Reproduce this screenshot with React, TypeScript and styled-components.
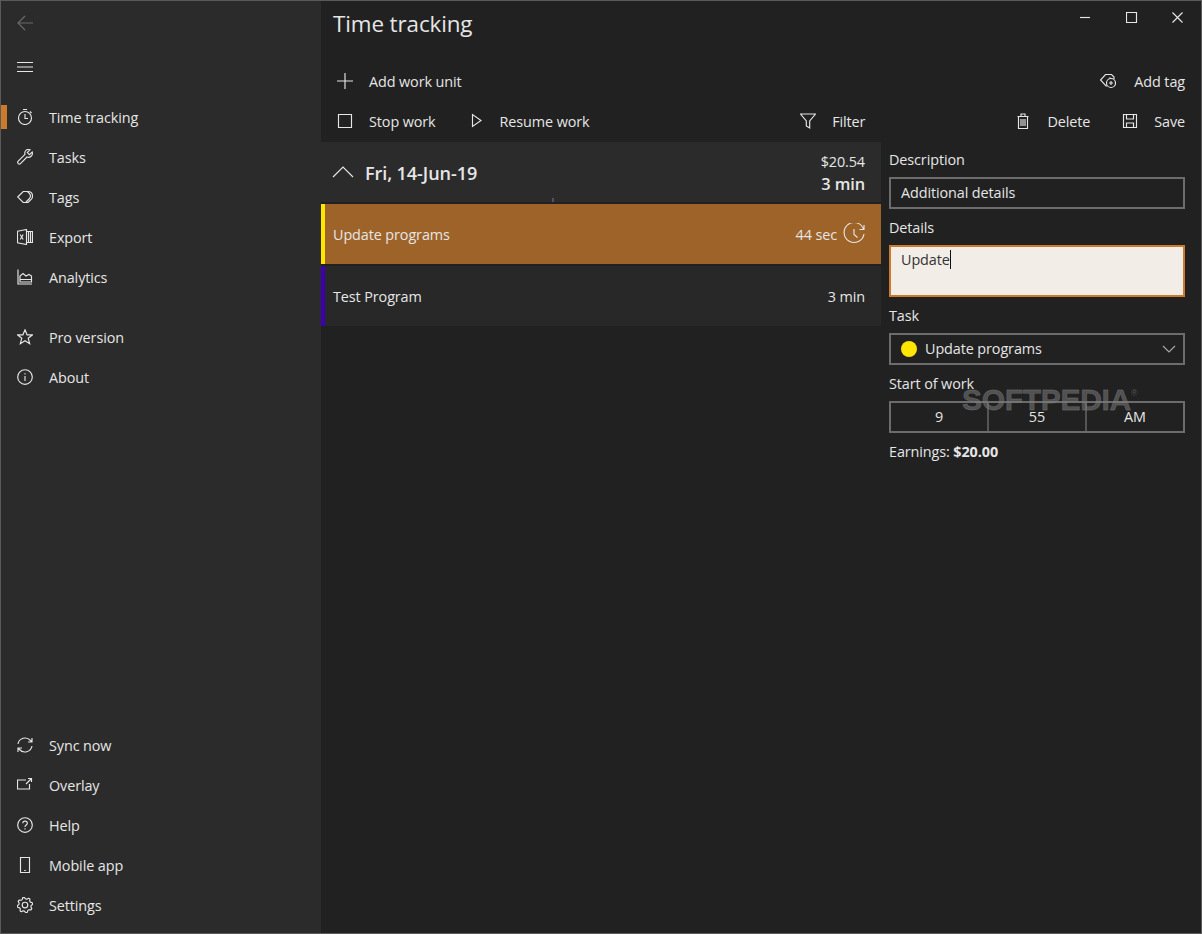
import React from 'react';
import styled, { createGlobalStyle } from 'styled-components';

const GlobalStyle = createGlobalStyle`
    html, body {
        margin: 0;
        padding: 0;
        background: #212121;
    }
    * {
        box-sizing: border-box;
    }
`;

const Window = styled.div`
    width: 1202px;
    height: 934px;
    display: flex;
    border: 1px solid #5a5a5a;
    background: #212121;
    color: #e6e6e6;
    font-family: 'Open Sans', 'Noto Sans', sans-serif;
    font-size: 14.4px;
    letter-spacing: -0.1px;
    overflow: hidden;
    position: relative;
`;

const Sidebar = styled.nav`
    width: 320px;
    flex: none;
    display: flex;
    flex-direction: column;
    background: #2b2b2b;
    padding-bottom: 8px;
`;

const TopIcon = styled.div<{ $dim?: boolean }>`
    height: 44px;
    padding-left: 16px;
    display: flex;
    align-items: center;
    color: ${(p) => (p.$dim ? '#6a6a6a' : '#e6e6e6')};
`;

const NavGroup = styled.div<{ $top: number }>`
    display: flex;
    flex-direction: column;
    margin-top: ${(p) => p.$top}px;
`;

const BottomGroup = styled(NavGroup)`
    margin-top: auto;
`;

const NavItem = styled.div<{ $active?: boolean }>`
    position: relative;
    height: 40px;
    padding-left: 16px;
    display: flex;
    align-items: center;
    gap: 16px;

    &::before {
        content: '';
        display: ${(p) => (p.$active ? 'block' : 'none')};
        position: absolute;
        left: 0;
        top: 8px;
        width: 6px;
        height: 24px;
        background: #cc7a2b;
    }
`;

const Glyph = styled.svg`
    width: 16px;
    height: 16px;
    flex: none;
    fill: none;
    stroke: currentColor;
    stroke-width: 1.15;
    display: block;
`;

const Main = styled.main`
    flex: 1;
    min-width: 0;
    display: flex;
    flex-direction: column;
`;

const TitleBar = styled.header`
    height: 60px;
    display: flex;
    justify-content: space-between;
    padding-left: 12px;
`;

const Title = styled.h1`
    margin: 0;
    font-size: 22.4px;
    font-weight: 400;
    line-height: 46px;
    letter-spacing: -0.1px;
`;

const WindowControls = styled.div`
    display: flex;
    gap: 30px;
    padding: 8px 13px 0 0;
`;

const Toolbar = styled.div`
    height: 40px;
    display: flex;
    align-items: center;
    padding: 0 16px;
`;

const ToolbarSpacer = styled.div<{ $width?: number }>`
    flex: ${(p) => (p.$width ? 'none' : 1)};
    width: ${(p) => p.$width ?? 0}px;
`;

const ToolButton = styled.div<{ $gap?: number }>`
    display: flex;
    align-items: center;
    gap: ${(p) => p.$gap ?? 16}px;
`;

const Content = styled.div`
    flex: 1;
    display: flex;
    min-height: 0;
    padding-top: 1px;
`;

const ListPane = styled.section`
    width: 560px;
    flex: none;
    display: flex;
    flex-direction: column;
    gap: 2px;
`;

const DayHeader = styled.div`
    position: relative;
    height: 60px;
    padding: 0 16px 0 11px;
    display: flex;
    align-items: center;
    background: #2b2b2b;
`;

const DayTitle = styled.div`
    margin-left: 11px;
    padding-top: 2px;
    font-size: 18.1px;
    font-weight: 600;
`;

const DayTotals = styled.div`
    margin-left: auto;
    padding-top: 2px;
    text-align: right;
    line-height: 22px;
`;

const Strong = styled.div`
    font-size: 16.4px;
    font-weight: 600;
`;

const Tick = styled.span`
    position: absolute;
    left: 231px;
    bottom: 0;
    width: 2px;
    height: 4px;
    background: #5a4a6a;
`;

const WorkRow = styled.div<{ $accent: string; $selected?: boolean }>`
    height: 60px;
    display: flex;
    align-items: center;
    padding: 0 16px 0 8px;
    border-left: 4px solid ${(p) => p.$accent};
    background: ${(p) => (p.$selected ? '#9e6329' : '#282828')};
`;

const RowTime = styled.div`
    margin-left: auto;
    display: flex;
    align-items: center;
    gap: 6px;
`;

const RowIcon = styled(Glyph)`
    width: 22px;
    height: 22px;
`;

const DetailPane = styled.aside`
    width: 296px;
    margin: -1px 0 0 8px;
    display: flex;
    flex-direction: column;
`;

const FieldLabel = styled.label`
    display: block;
    height: 36px;
    padding-top: 9px;
    line-height: 20px;
`;

const Field = styled.div`
    height: 32px;
    padding: 0 10px 2px;
    display: flex;
    align-items: center;
    border: 2px solid #6c6c6c;
`;

const FocusedField = styled(Field)`
    height: 52px;
    align-items: flex-start;
    padding-top: 3px;
    border-color: #cc7a2b;
    background: #f3ede8;
    color: #333;
    line-height: 20px;
`;

const Caret = styled.span`
    display: inline-block;
    width: 1px;
    height: 19px;
    background: #111;
    vertical-align: top;
`;

const ColorDot = styled.span`
    width: 16px;
    height: 16px;
    border-radius: 50%;
    background: #ffe600;
    margin: 1px 8px 0 0;
`;

const Chevron = styled(Glyph)`
    margin: 2px -3px 0 auto;
    width: 14px;
    height: 14px;
    color: #a8a8a8;
`;

const TimePicker = styled.div`
    height: 32px;
    display: grid;
    grid-template-columns: 96px 98px 1fr;
    border: 2px solid #6c6c6c;
`;

const TimeCell = styled.div`
    display: flex;
    align-items: center;
    justify-content: center;
    padding-bottom: 2px;
    & + & {
        border-left: 2px solid #555;
    }
`;

const Earnings = styled.div`
    margin-top: 9px;
    line-height: 20px;
`;

const Watermark = styled.div`
    position: absolute;
    left: 961px;
    top: 382px;
    font-family: 'Liberation Sans', sans-serif;
    font-size: 30px;
    font-weight: 700;
    letter-spacing: -0.3px;
    color: rgba(125, 125, 125, 0.55);
    -webkit-text-stroke: 0.8px rgba(125, 125, 125, 0.45);
    pointer-events: none;

    sup {
        font-size: 9px;
        font-weight: 400;
        vertical-align: 14px;
        -webkit-text-stroke: 0;
    }
`;

// scalloped outline for the settings cog
const gearPath = () => {
    const points: string[] = [];
    for (let i = 0; i < 32; i += 1) {
        const radius = i % 4 < 2 ? 7.7 : 6.1;
        const angle = ((i + 0.5) * Math.PI) / 16 - Math.PI / 8;
        points.push(`${(8 + radius * Math.cos(angle)).toFixed(2)} ${(8 + radius * Math.sin(angle)).toFixed(2)}`);
    }
    return `M${points.join('L')}Z`;
};

const icons: Record<string, React.ReactNode> = {
    back: <path d="M16 8H1M8 1 1 8l7 7" />,
    menu: <path d="M0 3.5h16M0 8h16M0 12.5h16" />,
    timer: (
        <>
            <circle cx="8" cy="9" r="6.5" />
            <path d="M6 .5h4M8 5v4.500h3M13 2.500l1.500 1.500" />
        </>
    ),
    wrench: (
        <path d="M1.200 12.200 8 5.400C7.200 3 8.800.5 11.400.5c.6 0 1.100.1 1.600.3L10.300 3.600l2.100 2.100L15.200 3c.9 2.600-1 5.300-3.700 5.300-.6 0-1-.1-1.500-.3l-6.800 6.800c-1.500 1.200-3.400-1.100-2-2.600Z" />
    ),
    tag: (
        <path d="M.7 8 6.200 2.500H11C14 2.500 15.500 4.800 15.500 7.200C15.500 8.800 14.700 10.200 13.500 11L11 13.500H6.200ZM10.500 3C13 4 14.500 7 12.500 9.500L9 13" />
    ),
    excel: (
        <>
            <path d="M.5 2.200 9.500.5v15l-9-1.700ZM9.500 2.500h6v11h-6" />
            <path d="M3.200 5.500l3 5M6.200 5.500l-3 5M11.500 3v10M13.500 3v10" />
        </>
    ),
    chart: (
        <path d="M1 .5v14.500h14M3 13h11.500v-2.500H3ZM3 10.500V7l3-2.500 3 2.500 3-1.500 2.500 1.500v3.500" />
    ),
    star: <path d="M8 .8l2.100 5h5.400l-4.300 3.400 1.500 5.500L8 11.700l-4.700 3 1.500-5.500L.5 5.800h5.400Z" />,
    info: (
        <>
            <circle cx="8" cy="8" r="7.300" />
            <path d="M8 7v5M8 4.200v1.200" />
        </>
    ),
    sync: (
        <path d="M1 7a7.200 7.200 0 0 1 12.500-3.500L15 5M15 1v4h-4M15 9a7.200 7.200 0 0 1-12.500 3.500L1 11M1 15v-4h4" />
    ),
    overlay: <path d="M9 3H.5v9h12V7M9 7l5-5M11 1.500h3.500V5" />,
    help: (
        <>
            <circle cx="8" cy="8" r="7.300" />
            <path d="M5.800 6.200C5.800 3.500 10.300 3.500 10.300 6.200c0 1.800-2.300 1.800-2.300 3.800M8 11.300v1.200" />
        </>
    ),
    mobile: <path d="M3.500.5h9v15h-9ZM7.200 13.500h1.600" />,
    gear: (
        <>
            <circle cx="8" cy="8" r="2.800" />
            <path d={gearPath()} strokeLinejoin="round" />
        </>
    ),
    plus: <path d="M8 0v16M0 8h16" />,
    stop: <path d="M1.500 1.500h13v13h-13Z" />,
    play: <path d="M4.500 1.500v12L13 7.500Z" />,
    filter: <path d="M.5 1h15L9.700 8v7l-3.400-2V8Z" />,
    addTag: (
        <>
            <path d="M7 13H6L.5 7 5.500 1.500h6L14 4v2" />
            <circle cx="11" cy="10" r="4.500" />
            <path d="M11 8v4M9 10h4M9.500 4.500h.8" />
        </>
    ),
    trash: <path d="M2.500 3.500h11M3.500 3.500v12h9v-12M6 3.500V1h4v2.500M6 6v7M8 6v7M10 6v7" />,
    save: <path d="M1.500 1.500h13v13h-13ZM4.500 1.500v4.500h7v-4.500M4.500 14.500v-4.500h7v4.500" />,
    recent: <path d="M20.500 6A10 10 0 1 0 21 11M21 2v4.500h-4.500M11 6v5.500l3.500 3" />,
    chevronUp: <path d="M1 16 11 6l10 10" />,
    chevronDown: <path d="M1 4l6 6 6-6" />,
    minimize: <path d="M0 8.500h10" />,
    maximize: <path d="M.5 3.500h10v10H.5Z" />,
    close: <path d="M.5 3.500l10 10M10.500 3.500l-10 10" />,
};

const Icon = ({ name }: { name: string }) => <Glyph viewBox="0 0 16 16">{icons[name]}</Glyph>;

const mainNav = [
    { icon: 'timer', label: 'Time tracking', active: true },
    { icon: 'wrench', label: 'Tasks' },
    { icon: 'tag', label: 'Tags' },
    { icon: 'excel', label: 'Export' },
    { icon: 'chart', label: 'Analytics' },
];

const infoNav = [
    { icon: 'star', label: 'Pro version' },
    { icon: 'info', label: 'About' },
];

const bottomNav = [
    { icon: 'sync', label: 'Sync now' },
    { icon: 'overlay', label: 'Overlay' },
    { icon: 'help', label: 'Help' },
    { icon: 'mobile', label: 'Mobile app' },
    { icon: 'gear', label: 'Settings' },
];

type NavEntry = { icon: string; label: string; active?: boolean };

const renderNav = (items: NavEntry[]) =>
    items.map((item) => (
        <NavItem key={item.label} $active={item.active}>
            <Icon name={item.icon} />
            <span>{item.label}</span>
        </NavItem>
    ));

const App = () => (
    <Window>
        <GlobalStyle />
        <Sidebar>
            <TopIcon $dim>
                <Icon name="back" />
            </TopIcon>
            <TopIcon>
                <Icon name="menu" />
            </TopIcon>
            <NavGroup $top={8}>{renderNav(mainNav)}</NavGroup>
            <NavGroup $top={20}>{renderNav(infoNav)}</NavGroup>
            <BottomGroup $top={0}>{renderNav(bottomNav)}</BottomGroup>
        </Sidebar>

        <Main>
            <TitleBar>
                <Title>Time tracking</Title>
                <WindowControls>
                    <Icon name="minimize" />
                    <Icon name="maximize" />
                    <Icon name="close" />
                </WindowControls>
            </TitleBar>

            <Toolbar>
                <ToolButton>
                    <Icon name="plus" />
                    <span>Add work unit</span>
                </ToolButton>
                <ToolbarSpacer />
                <ToolButton $gap={18}>
                    <Icon name="addTag" />
                    <span>Add tag</span>
                </ToolButton>
            </Toolbar>

            <Toolbar>
                <ToolButton>
                    <Icon name="stop" />
                    <span>Stop work</span>
                </ToolButton>
                <ToolbarSpacer $width={32} />
                <ToolButton>
                    <Icon name="play" />
                    <span>Resume work</span>
                </ToolButton>
                <ToolbarSpacer />
                <ToolButton>
                    <Icon name="filter" />
                    <span>Filter</span>
                </ToolButton>
                <ToolbarSpacer $width={150} />
                <ToolButton>
                    <Icon name="trash" />
                    <span>Delete</span>
                </ToolButton>
                <ToolbarSpacer $width={32} />
                <ToolButton>
                    <Icon name="save" />
                    <span>Save</span>
                </ToolButton>
            </Toolbar>

            <Content>
                <ListPane>
                    <DayHeader>
                        <RowIcon viewBox="0 0 22 22">{icons.chevronUp}</RowIcon>
                        <DayTitle>Fri, 14-Jun-19</DayTitle>
                        <DayTotals>
                            <div>$20.54</div>
                            <Strong>3 min</Strong>
                        </DayTotals>
                        <Tick />
                    </DayHeader>
                    <WorkRow $accent="#ffe600" $selected>
                        <span>Update programs</span>
                        <RowTime>
                            <span>44 sec</span>
                            <RowIcon viewBox="0 0 22 22">{icons.recent}</RowIcon>
                        </RowTime>
                    </WorkRow>
                    <WorkRow $accent="#3d00b0">
                        <span>Test Program</span>
                        <RowTime>3 min</RowTime>
                    </WorkRow>
                </ListPane>

                <DetailPane>
                    <FieldLabel>Description</FieldLabel>
                    <Field>Additional details</Field>
                    <FieldLabel>Details</FieldLabel>
                    <FocusedField>
                        <span>
                            Update
                            <Caret />
                        </span>
                    </FocusedField>
                    <FieldLabel>Task</FieldLabel>
                    <Field>
                        <ColorDot />
                        Update programs
                        <Chevron viewBox="0 0 14 14">{icons.chevronDown}</Chevron>
                    </Field>
                    <FieldLabel>Start of work</FieldLabel>
                    <TimePicker>
                        <TimeCell>9</TimeCell>
                        <TimeCell>55</TimeCell>
                        <TimeCell>AM</TimeCell>
                    </TimePicker>
                    <Earnings>
                        Earnings: <b>$20.00</b>
                    </Earnings>
                </DetailPane>
            </Content>
        </Main>

        <Watermark>
            SOFTPEDIA<sup>®</sup>
        </Watermark>
    </Window>
);

export default App;
